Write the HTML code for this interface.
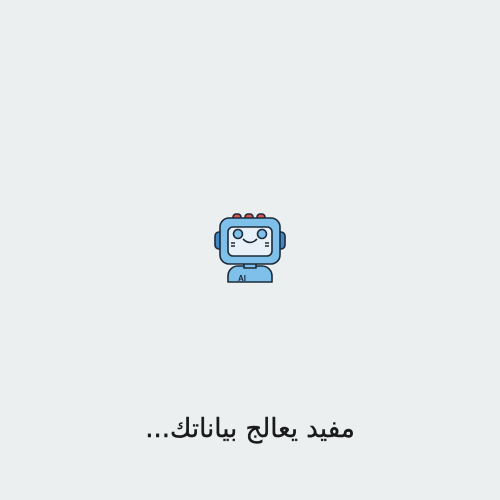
<html><head><style>
body{margin:0;width:500px;height:500px;background:#eceff0;overflow:hidden;position:relative}
.t{position:absolute;top:414px;left:0;width:500px;text-align:center;font:26px "DejaVu Sans",sans-serif;color:#1a1a1a;direction:rtl;-webkit-text-stroke:0.4px #1a1a1a}
</style></head><body>
<svg style="position:absolute;left:0;top:0" width="500" height="500" viewBox="0 0 500 500">
<g stroke="#1c2a3a" stroke-width="1.6" stroke-linejoin="round">
<rect x="233" y="214" width="8" height="6" rx="3" fill="#d9534f"/>
<rect x="245" y="214" width="8" height="6" rx="3" fill="#d9534f"/>
<rect x="257" y="214" width="8" height="6" rx="3" fill="#d9534f"/>
<path d="M228 282 v-6 a10 10 0 0 1 10 -10 h24 a10 10 0 0 1 10 10 v6 z" fill="#7ec0ea"/>
<rect x="244" y="262" width="12" height="6" fill="#7ec0ea"/>
<rect x="215" y="232" width="8" height="17" rx="4" fill="#3f88c5"/>
<rect x="277" y="232" width="8" height="17" rx="4" fill="#3f88c5"/>
<rect x="220" y="218" width="60" height="46" rx="9" fill="#7ec0ea"/>
<rect x="228" y="227" width="44" height="29" rx="5" fill="#e8f1f8"/>
<circle cx="238" cy="234" r="4.5" fill="#7ec0ea"/>
<circle cx="262" cy="234" r="4.5" fill="#7ec0ea"/>
<path d="M243 239 q7 7 14 0" fill="none"/>
<path d="M231 243 h4 M231 246 h4 M265 243 h4 M265 246 h4" fill="none"/>
</g>
<text x="238" y="281" font-family="Liberation Sans" font-weight="bold" font-size="8" fill="#1c2a3a">AI</text>
</svg>
<div class="t">مفيد يعالج بياناتك...</div>
</body></html>
